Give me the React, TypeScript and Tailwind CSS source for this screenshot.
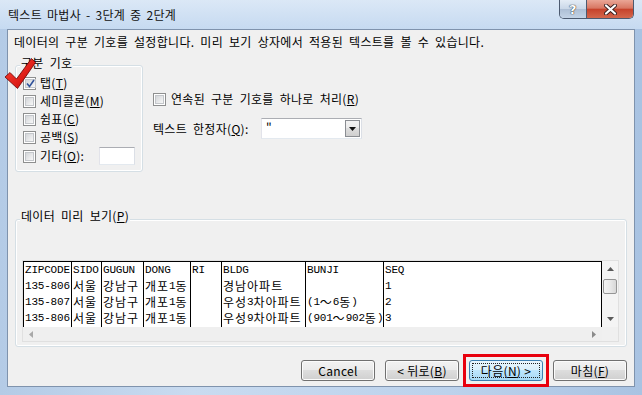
import React from 'react';

const rows = {
  zip: ['ZIPCODE', '135-806', '135-807', '135-806'],
  sido: ['SIDO', '서울', '서울', '서울'],
  gugun: ['GUGUN', '강남구', '강남구', '강남구'],
  dong: ['DONG', '개포1동', '개포1동', '개포1동'],
  ri: ['RI', '', '', ''],
  bldg: ['BLDG', '경남아파트', '우성3차아파트', '우성9차아파트'],
  bunji: ['BUNJI', '', '(1～6동)', '(901～902동)'],
  seq: ['SEQ', '1', '2', '3'],
};

const cols = [
  { key: 'zip', cls: 'w-[48px] border-r border-black' },
  { key: 'sido', cls: 'w-[30px] border-r border-black' },
  { key: 'gugun', cls: 'w-[42px] border-r border-black' },
  { key: 'dong', cls: 'w-[47px] border-r border-black' },
  { key: 'ri', cls: 'w-[31px] border-r border-black' },
  { key: 'bldg', cls: 'w-[84px] border-r border-black' },
  { key: 'bunji', cls: 'w-[78px] border-r border-black' },
  { key: 'seq', cls: 'flex-1' },
] as const;

// GulimChe-like cell: hangul full width, latin half width
function Cell({ text }: { text: string }) {
  const parts = text.split(/([가-힣～]+)/).filter(Boolean);
  return (
    <span className="flex h-[16px] items-center overflow-hidden whitespace-nowrap pl-[1px]">
      {parts.map((p, i) =>
        /[가-힣～]/.test(p) ? (
          <span key={i} className="font-['Noto_Sans_CJK_KR',sans-serif] text-[12px] leading-[14px] tracking-[1px]">
            {p}
          </span>
        ) : (
          <span key={i} className="font-['Liberation_Mono',monospace] text-[11px] leading-[14px] tracking-[-0.2px]">
            {p}
          </span>
        )
      )}
    </span>
  );
}

function Box({ checked }: { checked?: boolean }) {
  return (
    <span className="flex h-[13px] w-[13px] shrink-0 border border-[#8e8f8f] bg-white p-[1px]">
      <span className="flex flex-1 items-center justify-center border border-[#c3c6ca] bg-gradient-to-br from-[#d4d6d9] to-[#f7f7f7]">
        {checked && (
          <svg width="9" height="9" viewBox="0 0 9 9" className="overflow-visible">
            <path d="M1 4.5 L3.5 7.5 L8 1" fill="none" stroke="#30529a" strokeWidth="1.6" />
          </svg>
        )}
      </span>
    </span>
  );
}

function Btn({ children, def }: { children: React.ReactNode; def?: boolean }) {
  return (
    <div
      className={`flex h-[21px] w-[74px] rounded-[3px] border p-[2px] ${
        def
          ? 'border-[#3c7fb1] bg-[linear-gradient(#eaf6fd,#d9f0fc_45%,#bee6fd_50%,#a7d9f5)]'
          : 'border-[#707070] bg-[linear-gradient(#f2f2f2,#ebebeb_45%,#dddddd_50%,#cfcfcf)] shadow-[inset_0_0_0_1px_#fbfbfb]'
      }`}
    >
      <span
        className={`flex flex-1 items-center justify-center leading-[14px] ${
          def ? 'border border-dotted border-[#222]' : ''
        }`}
      >
        {children}
      </span>
    </div>
  );
}

export default function App() {
  return (
    <div className="relative flex h-[395px] w-[642px] flex-col overflow-hidden bg-[linear-gradient(90deg,#b4cbe6,#c9dbf0_30%,#bcd2ec_70%,#a9c3e2)] font-['Noto_Sans_CJK_KR',sans-serif] text-[12px] tracking-[0.3px] text-black [word-spacing:3px]">
      {/* Title bar */}
      <div className="flex h-[29px] shrink-0 items-start bg-[linear-gradient(#dbe8f6,#c6daf1)] pl-[8px] pr-[8px]">
        <span className="mt-[7px] leading-[16px] text-[#111] [word-spacing:2px]">텍스트 마법사 - 3단계 중 2단계</span>
        <div className="ml-auto flex h-[19px] overflow-hidden rounded-b-[5px] border border-t-0 border-[#4c5a70]">
          <div className="flex w-[27px] items-center justify-center border-r border-[#4c5a70] bg-[linear-gradient(#e4ecf5,#c9d7e8_50%,#aebfd5_52%,#c3d3e6)]">
            <span className="font-['DejaVu_Sans',sans-serif] text-[13px] font-bold leading-[13px] text-white [text-shadow:0_0_1px_#222,0_0_1px_#222]">?</span>
          </div>
          <div className="flex w-[46px] items-center justify-center bg-[linear-gradient(#eaa696,#d87763_45%,#c7432c_52%,#d4674c)]">
            <svg width="13" height="11" viewBox="0 0 13 11">
              <path d="M2 1.5 L11 9.5 M11 1.5 L2 9.5" stroke="#3a2020" strokeWidth="4" strokeLinecap="round" />
              <path d="M2 1.5 L11 9.5 M11 1.5 L2 9.5" stroke="#fff" strokeWidth="2.2" strokeLinecap="round" />
            </svg>
          </div>
        </div>
      </div>

      {/* Client area */}
      <div className="mx-[7px] flex h-[358px] shrink-0 flex-col border border-[#7f93ad] bg-[#f0f0f0]">
        <p className="ml-[6px] mt-[4px] whitespace-nowrap leading-[16px]">데이터의 구분 기호를 설정합니다. 미리 보기 상자에서 적용된 텍스트를 볼 수 있습니다.</p>

        <div className="flex items-start">
          {/* 구분 기호 */}
          <div className="ml-[7px] mt-[15px] h-[107px] w-[128px] rounded-[3px] border border-[#d5dfe5] shadow-[inset_0_0_0_1px_#fff]">
            <span className="-mt-[11px] ml-[4px] block w-fit bg-[#f0f0f0] px-[1px] leading-[16px]">구분 기호</span>
            <div className="mt-[3px] flex flex-col pl-[7px]">
              <label className="flex h-[18px] items-center gap-[4px]">
                <Box checked />
                <span>탭(<u>T</u>)</span>
              </label>
              <label className="flex h-[18px] items-center gap-[4px]">
                <Box />
                <span>세미콜론(<u>M</u>)</span>
              </label>
              <label className="flex h-[18px] items-center gap-[4px]">
                <Box />
                <span>쉼표(<u>C</u>)</span>
              </label>
              <label className="flex h-[18px] items-center gap-[4px]">
                <Box />
                <span>공백(<u>S</u>)</span>
              </label>
              <label className="flex h-[20px] items-center gap-[4px]">
                <Box />
                <span className="w-[55px]">기타(<u>O</u>):</span>
                <span className="h-[18px] w-[36px] border border-[#abadb3] border-l-[#e2e3ea] border-r-[#dbdfe6] border-b-[#e3e9ef] bg-white" />
              </label>
            </div>
          </div>

          {/* right options */}
          <div className="ml-[10px] flex flex-col">
            <label className="mt-[41px] flex h-[16px] items-center gap-[5px] leading-[16px]">
              <Box />
              <span>연속된 구분 기호를 하나로 처리(<u>R</u>)</span>
            </label>
            <div className="mt-[11px] flex h-[21px] items-center">
              <span className="w-[108px] leading-[16px]">텍스트 한정자(<u>Q</u>):</span>
              <div className="flex h-[21px] w-[101px] border border-[#abadb3] border-b-[#e3e9ef] border-l-[#e2e3ea] border-r-[#dbdfe6] bg-white">
                <span className="flex-1 pl-[4px] leading-[16px]">"</span>
                <span className="m-[1px] flex w-[15px] items-center justify-center border border-[#8a8d92] bg-[linear-gradient(#f2f2f2,#ebebeb_45%,#dddddd_50%,#cfcfcf)]">
                  <svg width="7" height="4" viewBox="0 0 7 4">
                    <path d="M0 0 H7 L3.5 4 Z" fill="#111" />
                  </svg>
                </span>
              </div>
            </div>
          </div>
        </div>

        {/* 데이터 미리 보기 */}
        <div className="ml-[7px] mt-[47px] h-[128px] w-[612px] rounded-[3px] border border-[#d5dfe5] shadow-[inset_0_0_0_1px_#fff]">
          <span className="-mt-[12px] ml-[4px] block w-fit bg-[#f0f0f0] px-[1px] leading-[16px]">데이터 미리 보기(<u>P</u>)</span>
          <div className="ml-[6px] mt-[36px] flex h-[82px] w-[597px] flex-col border border-[#e0e0e0] tracking-normal [word-spacing:0px]">
            <div className="flex h-[66px]">
              <div className="flex w-[579px] overflow-hidden border-l border-r border-t border-black bg-white">
                {cols.map(c => (
                  <div key={c.key} className={`flex shrink-0 flex-col overflow-hidden ${c.cls}`}>
                    {rows[c.key].map((t, i) => (
                      <Cell key={i} text={t} />
                    ))}
                  </div>
                ))}
              </div>
              <div className="flex w-[16px] flex-col items-center bg-[#f4f4f4]">
                <svg width="7" height="4" viewBox="0 0 7 4" className="mt-[6px]">
                  <path d="M0 4 H7 L3.5 0 Z" fill="#5a5a5a" />
                </svg>
                <span className="mt-[8px] h-[15px] w-[14px] rounded-[2px] border border-[#959595] bg-[linear-gradient(90deg,#f3f3f3,#e9e9e9_50%,#d8d8d8)]" />
                <svg width="7" height="4" viewBox="0 0 7 4" className="mb-[6px] mt-auto">
                  <path d="M0 0 H7 L3.5 4 Z" fill="#5a5a5a" />
                </svg>
              </div>
            </div>
            <div className="flex flex-1">
              <div className="flex w-[579px] items-center justify-between bg-[#efefef] px-[6px]">
                <svg width="4" height="7" viewBox="0 0 4 7">
                  <path d="M4 0 V7 L0 3.5 Z" fill="#a8a8a8" />
                </svg>
                <svg width="4" height="7" viewBox="0 0 4 7">
                  <path d="M0 0 V7 L4 3.5 Z" fill="#8a8a8a" />
                </svg>
              </div>
              <div className="w-[16px] bg-[#f0f0f0]" />
            </div>
          </div>
        </div>

        {/* Buttons */}
        <div className="mr-[7px] mt-[13px] flex justify-end gap-[10px] [word-spacing:0px]">
          <Btn>Cancel</Btn>
          <Btn>&lt; 뒤로(<u>B</u>)</Btn>
          <div className="relative">
            <Btn def>
              다음(<u>N</u>) &gt;
            </Btn>
            <span className="absolute -inset-[6px] border-[3px] border-[#e8000e]" />
          </div>
          <Btn>마침(<u>F</u>)</Btn>
        </div>
      </div>

      {/* red checkmark annotation */}
      <svg width="32" height="33" viewBox="0 0 32 33" className="absolute left-[4px] top-[57px]">
        <defs>
          <linearGradient id="rc" x1="0" y1="0" x2="1" y2="1">
            <stop offset="0" stopColor="#ff4a3a" />
            <stop offset="1" stopColor="#c80000" />
          </linearGradient>
        </defs>
        <path d="M1 20 L6 15.5 L12.5 22 L27.5 1.5 L31.5 5.5 L13.5 31.5 Z" fill="url(#rc)" stroke="#6a0000" strokeWidth="0.8" strokeLinejoin="round" />
      </svg>
    </div>
  );
}
